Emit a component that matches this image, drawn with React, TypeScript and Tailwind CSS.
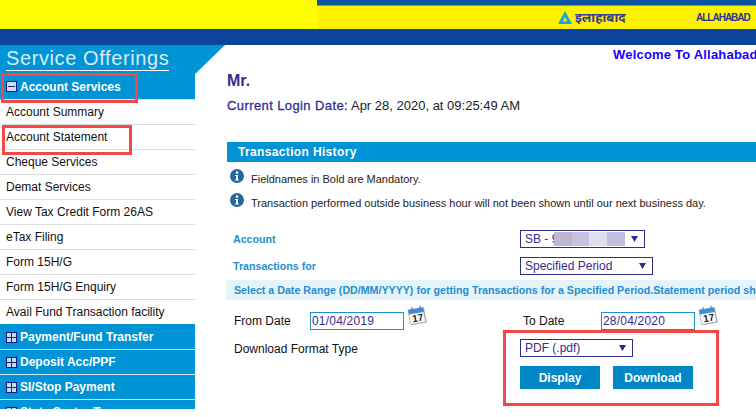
const serviceLinks = [
  "Account Summary",
  "Account Statement",
  "Cheque Services",
  "Demat Services",
  "View Tax Credit Form 26AS",
  "eTax Filing",
  "Form 15H/G",
  "Form 15H/G Enquiry",
  "Avail Fund Transaction facility",
]

const collapsed = ["Payment/Fund Transfer", "Deposit Acc/PPF", "SI/Stop Payment", "State Sector Tax"]

const ToggleBox = ({ open }: { open?: boolean }) => (
  <svg width="11" height="11" viewBox="0 0 11 11" className="shrink-0">
    <rect x="0.5" y="0.5" width="10" height="10" fill={open ? "#cfdcef" : "#bfe0f4"} stroke="#1c1c80" />
    <path d={open ? "M2 5.5h7" : "M1 5.5h9M5.5 1v9"} stroke="#1c1c80" strokeWidth="1" />
  </svg>
)

const InfoIcon = () => (
  <svg width="14" height="14" viewBox="0 0 14 14" className="shrink-0">
    <circle cx="7" cy="7" r="7" fill="#23689f" />
    <circle cx="7" cy="3.6" r="1.3" fill="#fff" />
    <path d="M5 6h3v4.4h1v1.1H5v-1.1h1V7.1H5z" fill="#fff" />
  </svg>
)

const CalendarIcon = () => (
  <svg width="21" height="21" viewBox="0 0 21 21" className="shrink-0">
    <path d="M2 5l15-2.5 3 15L5 20z" fill="#8f8f8f" opacity="0.55" />
    <path d="M1 5l15-2.5 2.6 14.5L3.6 19.5z" fill="#fbfbfb" stroke="#8a8a8a" strokeWidth="0.6" />
    <path d="M1 5l15-2.5 0.9 4.6-15 2.5z" fill="#3b8fdc" />
    <path d="M5 2v4M13 0.5v4" stroke="#55708a" strokeWidth="1" />
    <text x="5" y="16.5" fontSize="10" fontWeight="700" fill="#222" fontFamily="'Liberation Sans', sans-serif" transform="rotate(-9 10 12)">
      17
    </text>
  </svg>
)

const Dropdown = ({ w, children }: { w: string; children: React.ReactNode }) => (
  <div className={`relative flex h-[18px] items-center border border-[#2e2a8c] pl-[4px] text-[12px] font-normal text-[#3a2a8c] ${w}`}>
    {children}
    <svg width="7" height="6" viewBox="0 0 7 6" className="absolute right-[6px] top-[5px]">
      <path d="M0 0h7L3.5 6z" fill="#2e2a8c" />
    </svg>
  </div>
)

const DateField = ({ value }: { value: string }) => (
  <input
    readOnly
    value={value}
    className="h-[18px] w-[94px] border border-[#1e8fd0] px-[1px] text-[12px] tracking-[0.2px] text-[#3a2a8c] outline-none"
  />
)

const LogoMark = () => (
  <svg width="14" height="13" viewBox="0 0 14 13" className="shrink-0">
    <path d="M7 0l7 13H0z" fill="#14a5dc" />
    <path d="M7 6l2.4 4.4H4.6z" fill="#fff200" />
  </svg>
)

export default function App() {
  return (
    <div className="relative h-[417px] w-[756px] overflow-hidden bg-white font-['Liberation_Sans',Arial,sans-serif]">
      <div className="flex h-[29px]">
        <div className="w-[317px] bg-[#ffff00]" />
        <div className="flex flex-1 flex-col">
          <div className="h-[5px] bg-[#0a54a0]" />
          <div className="h-[1px] bg-[#8f9a3c]" />
          <div className="flex flex-1 items-center bg-[#fff200] pl-[241px]">
            <LogoMark />
            <span className="ml-[3px] w-[52px] font-['Noto_Sans',sans-serif] text-[13px] font-bold text-[#3a3a8c]">इलाहाबाद</span>
            <span className="ml-[69px] text-[10px] font-bold tracking-[-1px] text-[#2e3192]">ALLAHABAD</span>
          </div>
        </div>
      </div>
      <div className="h-[16px] bg-[#0c449c]" />

      <div className="flex">
        <aside className="w-[195px] shrink-0">
          <div className="h-[29px] w-[225px] bg-[#0093d6] pl-[6px] pt-[1px] [clip-path:polygon(0_0,100%_0,195px_100%,0_100%)]">
            <span className="inline-block border-b border-white text-[20px] leading-[24px] tracking-[0.6px] text-[#d8eef9]">
              Service Offerings
            </span>
          </div>
          <div className="h-[335px] overflow-hidden">
            <div className="flex h-[26px] items-center gap-[3px] border-b border-[#cfe6f4] bg-[#0093d6] pl-[6px] text-[12px] font-bold text-white">
              <ToggleBox open />
              Account Services
            </div>
            <div>
              {serviceLinks.map((link) => (
                <div key={link} className="flex h-[25px] items-center border-b border-[#dddddd] pl-[6px] text-[12px] text-[#111] last:h-[24px] last:border-b-0">
                  {link}
                </div>
              ))}
            </div>
            <div>
              {collapsed.map((label) => (
                <div key={label} className="flex h-[25px] items-center gap-[3px] border-t border-[#cfe6f4] bg-[#0093d6] pl-[6px] text-[12px] font-bold text-white first:border-t-[#0093d6]">
                  <ToggleBox />
                  {label}
                </div>
              ))}
            </div>
          </div>
        </aside>

        <main className="min-w-0 flex-1 pl-[32px]">
          <div className="flex h-[20px] items-center whitespace-nowrap pl-[386px] text-[13px] font-bold tracking-[0.2px] text-[#1a00ff]">
            Welcome To Allahabad
          </div>
          <div className="mt-[7px] text-[16px] font-bold leading-[18px] text-[#3b2a8c]">Mr.</div>
          <div className="mt-[8px] whitespace-nowrap text-[13px] leading-[16px] text-[#222]">
            <span className="tracking-[0.4px] text-[#2e3192] [-webkit-text-stroke:0.3px_#2e3192]">Current Login Date:</span> Apr 28, 2020, at 09:25:49 AM
          </div>

          <div className="mt-[28px] flex h-[20px] w-[600px] items-center bg-[#0093d6] pl-[11px] text-[12px] font-bold tracking-[0.35px] text-white">
            Transaction History
          </div>
          <div className="mt-[7px] flex h-[14px] items-start gap-[7px] pl-[3px] text-[11px] text-[#222]">
            <InfoIcon />
            <span className="mt-[3px] leading-[14px]">Fieldnames in Bold are Mandatory.</span>
          </div>
          <div className="mt-[10px] flex h-[14px] items-start gap-[7px] whitespace-nowrap pl-[3px] text-[11px] text-[#222]">
            <InfoIcon />
            <span className="mt-[3px] leading-[14px]">Transaction performed outside business hour will not been shown until our next business day.</span>
          </div>

          <div className="mt-[23px] flex h-[18px] items-center pl-[6px] text-[10.67px] font-bold text-[#1e8fd0]">
            <span className="w-[287px]">Account</span>
            <Dropdown w="w-[125px]">
              SB - 9
              <div className="-ml-[4px] flex h-[14px]">
                <div className="w-[18px] bg-[#c2b6cf]" />
                <div className="w-[17px] bg-[#c6c1dc]" />
                <div className="w-[18px] bg-[#dcdfec]" />
                <div className="w-[18px] bg-[#c0c0dc]" />
              </div>
            </Dropdown>
          </div>
          <div className="mt-[9px] flex h-[18px] items-center pl-[6px] text-[10.67px] font-bold text-[#1e8fd0]">
            <span className="w-[287px]">Transactions for</span>
            <Dropdown w="w-[133px]">Specified Period</Dropdown>
          </div>
          <div className="-ml-[1px] mt-[5px] flex h-[20px] w-[530px] items-center whitespace-nowrap bg-[#e5f3fb] pl-[8px] text-[10.67px] font-bold text-[#1e8fd0]">
            Select a Date Range (DD/MM/YYYY) for getting Transactions for a Specified Period.Statement period sh
          </div>

          <div className="mt-[5px] flex h-[25px] pl-[7px] text-[12px] text-[#111]">
            <span className="mt-[7px] w-[76px]">From Date</span>
            <div className="mt-[7px]">
              <DateField value="01/04/2019" />
            </div>
            <div className="ml-[3px]">
              <CalendarIcon />
            </div>
            <span className="ml-[95px] mt-[7px] w-[78px]">To Date</span>
            <div className="mt-[7px]">
              <DateField value="28/04/2020" />
            </div>
            <div className="ml-[3px]">
              <CalendarIcon />
            </div>
          </div>

          <div className="mt-[9px] flex h-[18px] pl-[7px] text-[12px] text-[#111]">
            <span className="mt-[1px] w-[286px]">Download Format Type</span>
            <Dropdown w="w-[113px]">PDF (.pdf)</Dropdown>
          </div>
          <div className="ml-[293px] mt-[9px] flex gap-[13px]">
            <button className="h-[23px] w-[80px] bg-[#0088c6] text-[12px] font-bold text-white">Display</button>
            <button className="h-[23px] w-[80px] bg-[#0088c6] text-[12px] font-bold text-white">Download</button>
          </div>
        </main>
      </div>

      <div className="absolute left-[1px] top-[73px] h-[30px] w-[137px] border-[3px] border-[#f44848]" />
      <div className="absolute left-[2px] top-[125px] h-[30px] w-[130px] border-[3px] border-[#f44848]" />
      <div className="absolute left-[503px] top-[330px] h-[76px] w-[216px] border-[3px] border-[#f44848]" />
    </div>
  )
}
